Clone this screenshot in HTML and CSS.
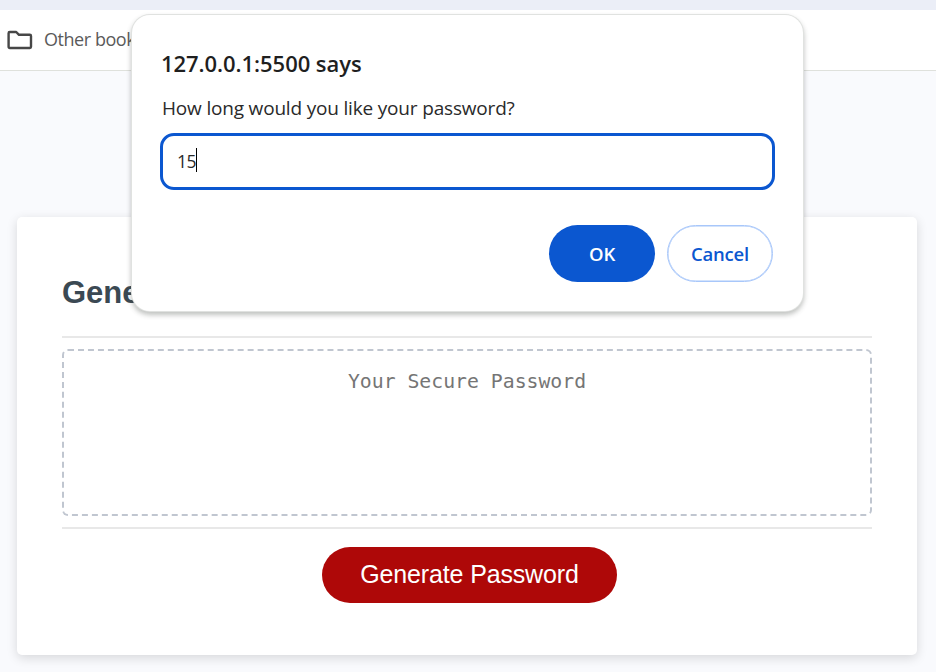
FILE: index.html
```html
<!DOCTYPE html>
<html lang="en">
<head>
<meta charset="utf-8">
<title>Password Generator</title>
<link rel="stylesheet" href="styles.css">
</head>
<body>
<div class="tab-strip"></div>
<nav class="bookmarks">
  <svg class="folder" width="26" height="20" viewBox="0 0 26 20" fill="none" stroke="#474747" stroke-width="2.4" stroke-linejoin="round"><path d="M2.8 2H9.2L12 4.8H22.8Q24 4.8 24 6V16.8Q24 18 22.8 18H2.8Q1.6 18 1.6 16.8V3.2Q1.6 2 2.8 2Z"/></svg>
  <span class="bookmark-label">Other bookmarks</span>
</nav>
<main class="page">
  <section class="card">
    <h2 class="card-title">Generate a Password</h2>
    <div class="card-body">
      <textarea class="password" readonly placeholder="Your Secure Password"></textarea>
    </div>
    <div class="card-footer">
      <button class="generate">Generate Password</button>
    </div>
  </section>
</main>
<div class="dialog" role="dialog">
  <h1 class="dialog-title">127.0.0.1:5500 says</h1>
  <p class="dialog-message">How long would you like your password?</p>
  <div class="prompt-input"><span class="value">15</span><span class="caret"></span></div>
  <div class="actions">
    <button class="action ok">OK</button>
    <button class="action cancel">Cancel</button>
  </div>
</div>
</body>
</html>
```
FILE: styles.css
```css
* { box-sizing: border-box; }
html, body { height: 100%; }
body {
  margin: 0;
  display: flex;
  flex-direction: column;
  overflow: hidden;
  position: relative;
  background: #f9fafd;
  font-family: "Liberation Sans", Arial, sans-serif;
}
.tab-strip { height: 10px; flex: none; background: #ebeef7; }
.bookmarks {
  height: 61px;
  flex: none;
  display: flex;
  align-items: center;
  gap: 11px;
  padding-left: 7px;
  background: #fff;
  border-bottom: 1px solid #dfe1dc;
}
.bookmark-label {
  font: 18px/26px "Open Sans", sans-serif;
  letter-spacing: -0.45px;
  margin-top: -2px;
  color: #5a5a5a;
}
.page { flex: 1; padding: 146px 19px 17px 17px; }
.card {
  height: 438px;
  padding: 45px;
  display: flex;
  flex-direction: column;
  background: #fff;
  border-radius: 5px;
  box-shadow: 0 3px 11px rgba(0, 0, 0, 0.14);
}
.card-title {
  margin: 0;
  height: 74px;
  font-size: 31px;
  line-height: 62px;
  color: #3b4953;
}
.card-body {
  height: 193px;
  padding: 11px 0;
  border-top: 2px solid #e8e8e8;
  border-bottom: 2px solid #e8e8e8;
}
.password {
  display: block;
  width: 100%;
  height: 167px;
  margin: 0;
  padding: 19px 20px;
  border: 2px dashed #c0c6d0;
  border-radius: 6px;
  outline: none;
  resize: none;
  overflow: hidden;
  background: transparent;
  text-align: center;
  font: 19.8px/24px "DejaVu Sans Mono", monospace;
}
.password::placeholder { color: #757575; }
.card-footer { display: flex; justify-content: center; padding: 18px 0 0 5px; }
.generate {
  width: 295px;
  height: 56px;
  padding: 0 0 2px;
  border: 0;
  border-radius: 28px;
  background: #ae0808;
  color: #fff;
  font: 25px/54px "Liberation Sans", Arial, sans-serif;
  letter-spacing: -0.15px;
}
.dialog {
  position: absolute;
  top: 15px;
  left: 132px;
  width: 671px;
  height: 296px;
  padding: 32px 28px 29px;
  border-radius: 18px;
  background: #fff;
  box-shadow: 0 0 0 1px #e0e2e0, 0 3px 5px 1px rgba(60, 64, 60, 0.32);
  font-family: "Open Sans", sans-serif;
  color: #1f1f1f;
}
.dialog-title {
  margin: 0 0 0 1px;
  font-size: 22px;
  font-weight: 600;
  line-height: 32px;
  letter-spacing: -0.05px;
}
.dialog-message {
  margin: 15px 0 11px 2px;
  font-size: 19px;
  line-height: 28px;
  letter-spacing: -0.18px;
  white-space: nowrap;
  color: #2a2a2a;
}
.prompt-input {
  width: 615px;
  height: 57px;
  display: flex;
  align-items: center;
  padding-left: 14px;
  border: 3px solid #0b57d0;
  border-radius: 14px;
}
.value { margin-top: -1px; font-size: 17.5px; letter-spacing: -0.5px; color: #2a2a2a; }
.caret { width: 1px; height: 24px; margin-top: -3px; background: #000; }
.actions { display: flex; justify-content: flex-end; gap: 12px; margin-top: 35px; padding-right: 2px; }
.action {
  width: 106px;
  height: 57px;
  padding: 0;
  border-radius: 29px;
  font: 600 18.5px/54px "Open Sans", sans-serif;
  letter-spacing: -0.2px;
}
.ok { border: 0; background: #0b57d0; color: #fff; }
.cancel { border: 1px solid #a8c7fa; box-shadow: inset 0 0 0 0.5px #a8c7fa; background: #fff; color: #0b57d0; }
```
